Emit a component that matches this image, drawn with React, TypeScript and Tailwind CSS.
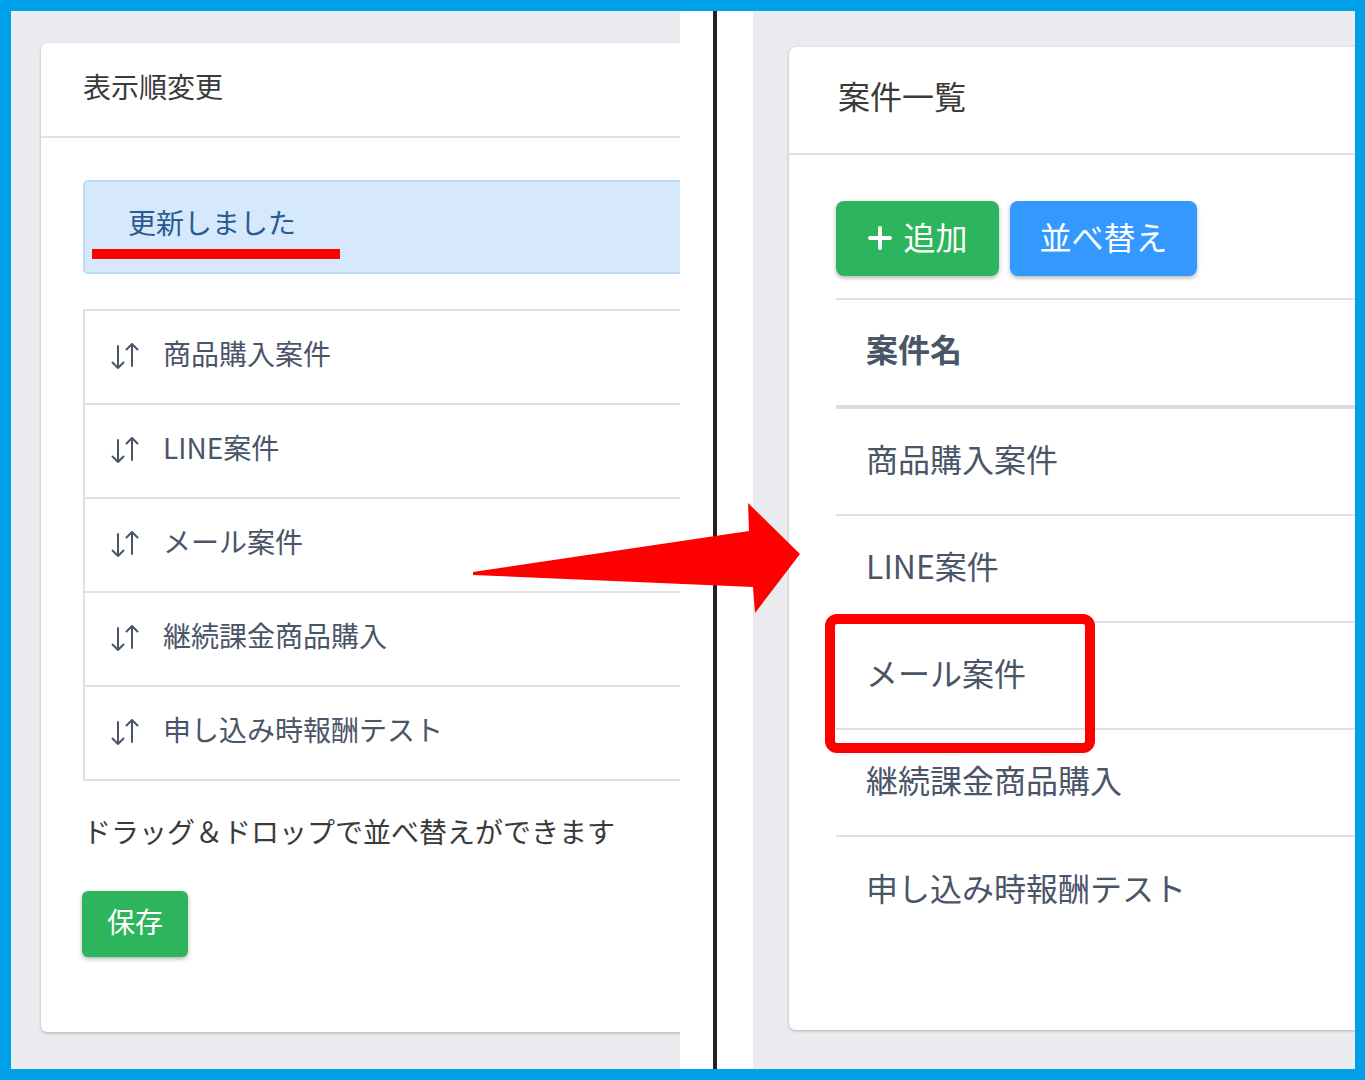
import React from 'react';

const font = { fontFamily: '"Noto Sans CJK JP", "Noto Sans", sans-serif' };

function SortIcon() {
  return (
    <svg width="30" height="28" viewBox="0 0 30 28" fill="none" stroke="#4a5568" strokeWidth="2" strokeLinecap="round" strokeLinejoin="round">
      <path d="M8 3v22M2.5 19.5L8 25l5.5-5.5" />
      <path d="M22 23V1M16.5 6.5L22 1l5.5 5.5" />
    </svg>
  );
}

export default function App() {
  const leftItems = ['商品購入案件', 'LINE案件', 'メール案件', '継続課金商品購入', '申し込み時報酬テスト'];
  const rows = ['商品購入案件', 'LINE案件', 'メール案件', '継続課金商品購入', '申し込み時報酬テスト'];

  return (
    <div className="relative w-[1365px] h-[1080px] bg-[#00a0e9] pt-[11px] pl-[11px] pr-[10px] pb-[11px] overflow-hidden" style={font}>
      <div className="flex h-full">
        {/* left screenshot */}
        <div className="w-[669px] h-full bg-[#e9ebee] overflow-hidden pt-[32px] pl-[30px]">
          <div className="w-[700px] h-[989px] bg-white rounded-[6px] shadow-[0_1px_3px_rgba(0,0,0,0.25)]">
            <div className="h-[95px] border-b-2 border-[#dee2e6] pl-[42px] flex items-center text-[28px] text-[#3a3a3a] pb-[8px]">
              表示順変更
            </div>
            <div className="pl-[42px] pt-[42px]">
              <div className="h-[94px] bg-[#d6e8fc] border-2 border-[#bcdaf9] rounded-[5px] pl-[43px] flex items-center text-[28px] text-[#2a5a8f] pb-[10px]">
                更新しました
              </div>
              <div className="mt-[35px] border-l-2 border-t-2 border-[#dee2e6]">
                {leftItems.map((t) => (
                  <div key={t} className="h-[94px] border-b-2 border-[#dee2e6] flex items-center pl-[25px] text-[28px] text-[#4a5568]">
                    <SortIcon />
                    <span className="ml-[23px] -mt-[8px]">{t}</span>
                  </div>
                ))}
              </div>
              <p className="mt-[30px] text-[28px] leading-[40px] text-[#3a3a3a]">ドラッグ＆ドロップで並べ替えができます</p>
              <button className="mt-[40px] -ml-[1px] w-[106px] h-[66px] bg-[#2db55d] rounded-[6px] text-white text-[28px] shadow-[0_2px_4px_rgba(0,0,0,0.3)] flex items-center justify-center pb-[6px]">
                保存
              </button>
            </div>
          </div>
        </div>

        {/* divider */}
        <div className="w-[73px] h-full bg-white pl-[33px]">
          <div className="w-[4px] h-full bg-[#222]" />
        </div>

        {/* right screenshot */}
        <div className="flex-1 h-full bg-[#e9ebee] overflow-hidden pt-[36px] pl-[36px]">
          <div className="w-[700px] h-[983px] bg-white rounded-[7px] shadow-[0_1px_3px_rgba(0,0,0,0.25)]">
            <div className="h-[108px] border-b-2 border-[#dee2e6] pl-[49px] flex items-center text-[32px] text-[#3a3a3a] pb-[10px]">
              案件一覧
            </div>
            <div className="pl-[47px] pt-[46px]">
              <div className="flex gap-[11px]">
                <button className="w-[163px] h-[75px] bg-[#2db55d] rounded-[8px] text-white text-[32px] shadow-[0_2px_4px_rgba(0,0,0,0.3)] flex items-center justify-center pb-[6px]">
                  <svg width="26" height="26" viewBox="0 0 26 26" stroke="white" strokeWidth="4" strokeLinecap="round" className="mr-[10px] mt-[4px]">
                    <path d="M13 3v20M3 13h20" />
                  </svg>
                  追加
                </button>
                <button className="w-[187px] h-[75px] bg-[#3399ff] rounded-[8px] text-white text-[32px] shadow-[0_2px_4px_rgba(0,0,0,0.3)] flex items-center justify-center pb-[6px]">
                  並べ替え
                </button>
              </div>
              <div className="mt-[22px] border-t-2 border-[#dee2e6]">
                <div className="h-[109px] border-b-4 border-[#dcdde3] flex items-center pl-[30px] text-[32px] font-bold text-[#4a5568] pb-[10px]">
                  案件名
                </div>
                {rows.map((t, i) => (
                  <div
                    key={t}
                    className={`h-[107px] flex items-center pl-[30px] text-[32px] text-[#4a5568] pb-[8px] ${i < rows.length - 1 ? 'border-b-2 border-[#dee2e6]' : ''}`}
                  >
                    {t}
                  </div>
                ))}
              </div>
            </div>
          </div>
        </div>
      </div>

      {/* annotations */}
      <div className="absolute left-[92px] top-[249px] w-[248px] h-[10px] bg-[#ff0000]" />
      <div className="absolute left-[825px] top-[614px] w-[270px] h-[139px] border-[10px] border-[#ff0000] rounded-[12px]" />
      <svg className="absolute left-0 top-0 pointer-events-none" width="1365" height="1080">
        <polygon points="473,572 749,531 748,503 800,554 755,613 753,587 473,575" fill="#ff0000" />
      </svg>
    </div>
  );
}
